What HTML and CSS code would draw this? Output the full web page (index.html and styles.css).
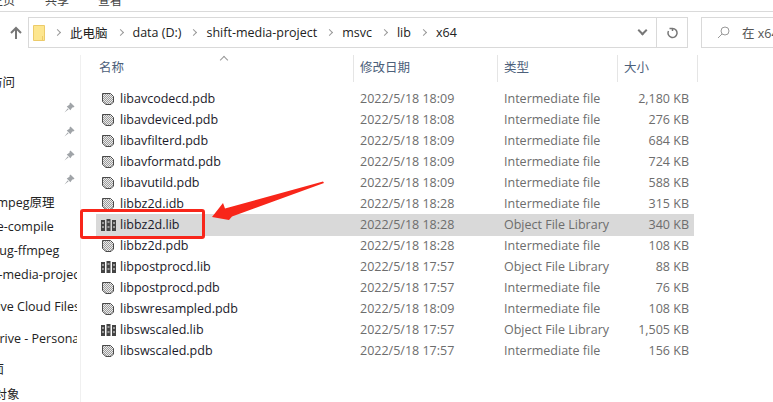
FILE: index.html
```html
<!DOCTYPE html>
<html lang="zh-CN">
<head>
    <meta charset="UTF-8">
    <title>x64</title>
    <link rel="stylesheet" href="styles.css">
</head>
<body>
    <svg class="defs" width="0" height="0">
        <defs>
            <pattern id="dither" width="2" height="2" patternUnits="userSpaceOnUse">
                <rect width="2" height="2" fill="#ececec"/>
                <rect width="1" height="1" fill="#9a9a9a"/>
                <rect x="1" y="1" width="1" height="1" fill="#9a9a9a"/>
            </pattern>
        </defs>
        <symbol id="ico-pdb" viewBox="0 0 15 14">
            <path d="M1.500 1.500H9.500L12.500 4.500V10L10 12.500H5L1.500 9.500Z" fill="url(#dither)" stroke="#4a4a4a"/>
        </symbol>
        <symbol id="ico-lib" viewBox="0 0 15 14">
            <path d="M0 2H4V13H0ZM5.500 1H9.500V13H5.500ZM11 2H15V13H11Z" fill="#444"/>
            <path d="M1 5H3M1 9H3M6.500 4H8.500M6.500 9H8.500M12 5H14M12 9H14" stroke="#eee"/>
        </symbol>
        <symbol id="ico-pin" viewBox="0 0 12 12">
            <path d="M7 0.500L11.500 5L10 6L9 6L7 9L3 5L6 3L6 2ZM4 7L0.500 11.500L5 8Z" fill="#a0a4a8"/>
        </symbol>
    </svg>

    <div class="tabs">
        <span class="tab-first">主页</span>
        <span>共享</span>
        <span>查看</span>
    </div>

    <div class="toolbar">
        <svg class="up" width="14" height="14" viewBox="0 0 14 14"><path d="M7 13V2M2 7L7 2L12 7" fill="none" stroke="#777" stroke-width="2"/></svg>
        <div class="address">
            <div class="crumbs">
                <svg class="folder" width="12" height="16" viewBox="0 0 12 16"><path d="M0.500 0.500H11.500V15.500H0.500Z" fill="#fde68f" stroke="#eccb6a"/><path d="M9.500 11V15" stroke="#eccb6a"/></svg>
                <i class="sep"></i><span>此电脑</span>
                <i class="sep"></i><span>data (D:)</span>
                <i class="sep"></i><span>shift-media-project</span>
                <i class="sep"></i><span>msvc</span>
                <i class="sep"></i><span>lib</span>
                <i class="sep"></i><span>x64</span>
            </div>
            <div class="drop"><i class="chev"></i></div>
            <div class="refresh">
                <svg width="12" height="12" viewBox="0 0 12 12"><path d="M6.500 1.500A4.500 4.500 0 1 1 2.500 4M6.500 1.500H3.500M6.500 1.500V4" fill="none" stroke="#777" stroke-width="1.500"/></svg>
            </div>
        </div>
        <div class="search">
            <svg width="13" height="13" viewBox="0 0 13 13"><circle cx="8" cy="5" r="4" fill="none" stroke="#999"/><path d="M5 8L1 12" stroke="#999"/></svg>
            <span>在 x64 中搜索</span>
        </div>
    </div>

    <div class="main">
        <div class="side">
            <div class="nav nav-quick">快速访问</div>
            <div class="pins">
                <svg width="11" height="11"><use href="#ico-pin"/></svg>
                <svg width="11" height="11"><use href="#ico-pin"/></svg>
                <svg width="11" height="11"><use href="#ico-pin"/></svg>
                <svg width="11" height="11"><use href="#ico-pin"/></svg>
            </div>
            <div class="nav nav-ffmpeg">ffmpeg原理</div>
            <div class="nav nav-compile">pre-compile</div>
            <div class="nav nav-debug">debug-ffmpeg</div>
            <div class="nav nav-shift">shift-media-project</div>
            <div class="nav nav-cloud">Creative Cloud Files</div>
            <div class="nav nav-drive">OneDrive - Personal</div>
            <div class="nav nav-desk">桌面</div>
            <div class="nav nav-obj">3D 对象</div>
        </div>

        <div class="content">
            <div class="sort-caret"><i></i></div>
            <div class="head">
                <div class="col-name">名称</div>
                <div class="col-date">修改日期</div>
                <div class="col-type">类型</div>
                <div class="col-size">大小</div>
            </div>
            <div class="rows">
                <div class="row"><svg class="ico"><use href="#ico-pdb"/></svg><div class="col-name">libavcodecd.pdb</div><div class="col-date">2022/5/18 18:09</div><div class="col-type">Intermediate file</div><div class="col-size">2,180 KB</div></div>
                <div class="row"><svg class="ico"><use href="#ico-pdb"/></svg><div class="col-name">libavdeviced.pdb</div><div class="col-date">2022/5/18 18:08</div><div class="col-type">Intermediate file</div><div class="col-size">276 KB</div></div>
                <div class="row"><svg class="ico"><use href="#ico-pdb"/></svg><div class="col-name">libavfilterd.pdb</div><div class="col-date">2022/5/18 18:09</div><div class="col-type">Intermediate file</div><div class="col-size">684 KB</div></div>
                <div class="row"><svg class="ico"><use href="#ico-pdb"/></svg><div class="col-name">libavformatd.pdb</div><div class="col-date">2022/5/18 18:09</div><div class="col-type">Intermediate file</div><div class="col-size">724 KB</div></div>
                <div class="row"><svg class="ico"><use href="#ico-pdb"/></svg><div class="col-name">libavutild.pdb</div><div class="col-date">2022/5/18 18:09</div><div class="col-type">Intermediate file</div><div class="col-size">588 KB</div></div>
                <div class="row"><svg class="ico"><use href="#ico-pdb"/></svg><div class="col-name">libbz2d.idb</div><div class="col-date">2022/5/18 18:28</div><div class="col-type">Intermediate file</div><div class="col-size">315 KB</div></div>
                <div class="row selected"><svg class="ico"><use href="#ico-lib"/></svg><div class="col-name">libbz2d.lib</div><div class="col-date">2022/5/18 18:28</div><div class="col-type">Object File Library</div><div class="col-size">340 KB</div></div>
                <div class="row"><svg class="ico"><use href="#ico-pdb"/></svg><div class="col-name">libbz2d.pdb</div><div class="col-date">2022/5/18 18:28</div><div class="col-type">Intermediate file</div><div class="col-size">108 KB</div></div>
                <div class="row"><svg class="ico"><use href="#ico-lib"/></svg><div class="col-name">libpostprocd.lib</div><div class="col-date">2022/5/18 17:57</div><div class="col-type">Object File Library</div><div class="col-size">88 KB</div></div>
                <div class="row"><svg class="ico"><use href="#ico-pdb"/></svg><div class="col-name">libpostprocd.pdb</div><div class="col-date">2022/5/18 17:57</div><div class="col-type">Intermediate file</div><div class="col-size">76 KB</div></div>
                <div class="row"><svg class="ico"><use href="#ico-pdb"/></svg><div class="col-name">libswresampled.pdb</div><div class="col-date">2022/5/18 18:09</div><div class="col-type">Intermediate file</div><div class="col-size">108 KB</div></div>
                <div class="row"><svg class="ico"><use href="#ico-lib"/></svg><div class="col-name">libswscaled.lib</div><div class="col-date">2022/5/18 17:57</div><div class="col-type">Object File Library</div><div class="col-size">1,505 KB</div></div>
                <div class="row"><svg class="ico"><use href="#ico-pdb"/></svg><div class="col-name">libswscaled.pdb</div><div class="col-date">2022/5/18 17:57</div><div class="col-type">Intermediate file</div><div class="col-size">156 KB</div></div>
            </div>
        </div>
    </div>

    <!-- annotation drawn on top of the screenshot -->
    <div class="mark"></div>
    <svg class="arrow" width="114" height="40" viewBox="0 0 114 40"><path d="M111 0.500L112 2L20 35.500L17 39L0 36L11 22L13 27.500Z" fill="#f8261a"/></svg>
</body>
</html>
```

FILE: styles.css
```css
*{
    box-sizing: border-box;
}
html, body{
    height: 100%;
}
body{
    margin: 0;
    width: 773px;
    height: 402px;
    overflow: hidden;
    position: relative;
    background-color: #fff;
    color: #222;
    font-family: "Open Sans", "Noto Sans CJK SC", sans-serif;
    font-size: 12.500px;
}
.defs{
    display: block;
    height: 0;
}

/* ribbon tabs, only the bottom of the text is visible */
.tabs{
    height: 12px;
    display: flex;
    gap: 28px;
    font-family: "Noto Sans CJK SC", sans-serif;
    font-size: 12px;
    line-height: 18px;
    color: #444;
    border-bottom: 1px solid #dadada;
    overflow: hidden;
}
.tabs span{
    width: 25px;
    flex: none;
    margin-top: -9px;
}
.tabs .tab-first{
    margin-left: -9px;
    margin-right: 1px;
}

.toolbar{
    height: 31px;
    margin-top: 5px;
    display: flex;
    align-items: center;
}
.up{
    margin-left: 9px;
    margin-right: 5px;
    flex: none;
}
.address{
    width: 660px;
    flex: none;
    height: 31px;
    display: flex;
    border: 1px solid #d9d9d9;
}
.crumbs{
    flex: 1;
    display: flex;
    align-items: center;
    padding-left: 4px;
    color: #222;
}
.folder{
    flex: none;
}
.sep{
    width: 5px;
    height: 5px;
    margin: 0 10px 0 10px;
    border-top: 1.500px solid #999;
    border-right: 1.500px solid #999;
    transform: rotate(45deg);
    flex: none;
}
.drop{
    width: 28px;
    display: flex;
    align-items: center;
    justify-content: center;
    border-right: 1px solid #d9d9d9;
}
.chev{
    width: 7px;
    height: 7px;
    margin-top: -4px;
    border-right: 2px solid #777;
    border-bottom: 2px solid #777;
    transform: rotate(45deg);
}
.refresh{
    width: 30px;
    display: flex;
    align-items: center;
    justify-content: center;
}
.search{
    margin-left: 13px;
    flex: none;
    width: 72px;
    height: 31px;
    display: flex;
    align-items: center;
    gap: 12px;
    padding-left: 15px;
    border: 1px solid #d9d9d9;
    border-right: 0;
    white-space: nowrap;
    overflow: hidden;
    color: #555;
}
.search svg{
    flex: none;
}

.main{
    display: flex;
    height: 354px;
    margin-top: 7px;
}
.side{
    width: 81px;
    flex: none;
    border-right: 1px solid #f0f0f0;
    overflow: hidden;
    padding-top: 19px;
    padding-right: 3px;
}
.nav{
    white-space: nowrap;
    height: 18px;
    line-height: 18px;
    overflow: hidden;
    margin-bottom: 6px;
}
.nav-quick{
    text-indent: -35px;
    margin-bottom: 0;
}
.pins{
    height: 102px;
    padding-top: 10px;
    padding-left: 64px;
    display: flex;
    flex-direction: column;
    gap: 13px;
}
.pins svg{
    flex: none;
}
.nav-ffmpeg{
    text-indent: -12px;
}
.nav-compile{
    text-indent: -16px;
}
.nav-debug{
    text-indent: -23px;
}
.nav-shift{
    text-indent: -27px;
    margin-bottom: 14px;
}
.nav-cloud{
    text-indent: -34px;
    margin-bottom: 14px;
}
.nav-drive{
    text-indent: -34px;
    margin-bottom: 13px;
}
.nav-desk{
    text-indent: -21px;
    margin-bottom: 7px;
}
.nav-obj{
    text-indent: -25px;
}

.content{
    flex: 1;
    padding-left: 15px;
    position: relative;
}
.sort-caret{
    height: 0;
}
.sort-caret i{
    position: absolute;
    left: 140px;
    top: 2px;
    width: 6px;
    height: 6px;
    border-top: 1px solid #999;
    border-left: 1px solid #999;
    transform: rotate(45deg);
}
.head{
    height: 27px;
    margin-bottom: 6px;
    display: flex;
    color: #4c607a;
    line-height: 26px;
}
.head .col-name{
    width: 257px;
    padding-left: 3px;
}
.head .col-date, .head .col-type, .head .col-size{
    border-left: 1px solid #e5e5e5;
    padding-left: 6px;
}
.head .col-date{
    width: 144px;
}
.head .col-type{
    width: 120px;
}
.head .col-size{
    width: 81px;
    border-right: 1px solid #e5e5e5;
}
.row{
    width: 598px;
    height: 21px;
    display: flex;
    align-items: center;
    padding-left: 5px;
    white-space: nowrap;
}
.row.selected{
    background-color: #d9d9d9;
    height: 22px;
    margin-bottom: -1px;
    padding-bottom: 1px;
}
.ico{
    width: 15px;
    height: 14px;
    flex: none;
    margin-right: 4px;
}
.row .col-name{
    width: 240px;
    color: #1a1a2a;
}
.row .col-date{
    width: 144px;
    color: #6d6d6d;
}
.row .col-type{
    width: 120px;
    color: #6d6d6d;
}
.row .col-size{
    width: 65px;
    text-align: right;
    color: #6d6d6d;
}

.mark{
    position: absolute;
    left: 80px;
    top: 209px;
    width: 125px;
    height: 30px;
    border: 3px solid #f8261a;
    border-radius: 3px;
}
.arrow{
    position: absolute;
    left: 212px;
    top: 181px;
}
```
